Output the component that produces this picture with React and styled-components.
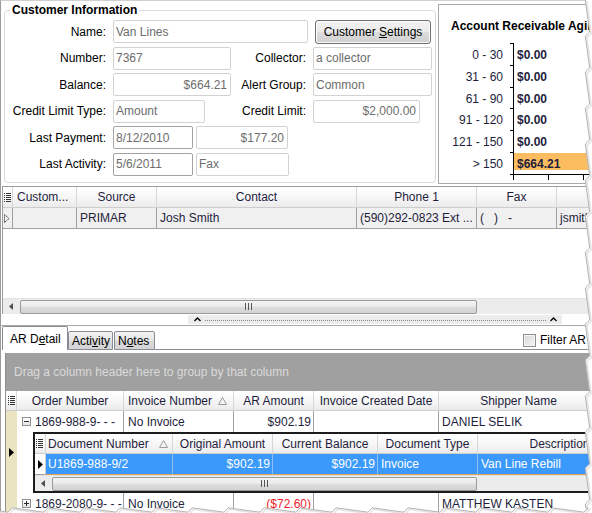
import React from 'react';
import styled, { createGlobalStyle } from 'styled-components';

const GRID_TEXT = '#1e1e3c';

const Global = createGlobalStyle`
  html, body { margin: 0; padding: 0; background: #fff; }
  body {
    font-family: "Liberation Sans", Arial, sans-serif;
    font-size: 12px;
    color: #000;
    overflow: hidden;
  }
  * { box-sizing: border-box; }
`;

const Page = styled.div`
  position: relative;
  width: 592px;
  height: 513px;
  overflow: hidden;
`;

const Screen = styled.div`
  width: 592px;
  height: 513px;
  overflow: hidden;
  background: #fff;
  border-left: 1px solid #9c9c9c;
  border-top: 1px solid #d0d0d0;
  display: flex;
  flex-direction: column;
`;

/* ---------- top section ---------- */
const TopSection = styled.div`
  display: flex;
  height: 184px;
  padding-left: 3px;
  flex-shrink: 0;
`;

const GroupBox = styled.fieldset`
  margin: 2px 0 0 0;
  padding: 3px 0 0 0;
  width: 432px;
  height: 180px;
  border: 1px solid #d3dce3;
  border-radius: 4px;
  min-width: 0;
  flex-shrink: 0;
`;

const Legend = styled.legend`
  margin-left: 5px;
  padding: 0 2px;
  font-weight: bold;
  font-size: 12px;
  line-height: 14px;
  color: #000;
`;

const Form = styled.div`
  display: flex;
  flex-direction: column;
  gap: 3.6px;
`;

const FormRow = styled.div`
  display: flex;
  align-items: center;
  height: 23px;
`;

const Label = styled.div`
  width: ${p => p.$w}px;
  flex-shrink: 0;
  text-align: right;
  padding-right: 7px;
  white-space: nowrap;
  color: #000;
`;

const Field = styled.div`
  width: ${p => p.$w}px;
  height: 23px;
  flex-shrink: 0;
  margin-left: ${p => p.$ml || 0}px;
  border: 1px solid ${p => (p.$dark ? '#a3a3a3' : '#d2d2d2')};
  border-radius: 2px;
  background: #fff;
  color: #6d6d6d;
  display: flex;
  align-items: center;
  justify-content: ${p => (p.$right ? 'flex-end' : 'flex-start')};
  padding: 0 ${p => (p.$right ? 3 : 2)}px;
  white-space: nowrap;
  overflow: hidden;
`;

const Button = styled.button`
  width: 116px;
  height: 24px;
  margin-left: 7px;
  padding: 0;
  border: 1px solid #707070;
  border-radius: 3px;
  background: linear-gradient(#f2f2f2 0%, #ebebeb 48%, #dddddd 52%, #cfcfcf 100%);
  box-shadow: inset 0 0 0 1px #fbfbfb;
  font: inherit;
  color: #000;
  flex-shrink: 0;
`;

const ArPanel = styled.div`
  flex: 1;
  min-width: 0;
  margin: 3px 0 0 2px;
  height: 180px;
  border: 1px solid #a9a9a9;
  border-right: none;
  background: #fff;
  overflow: hidden;
`;

const ArTitle = styled.div`
  padding: 15px 0 0 12px;
  font-weight: bold;
  line-height: 12px;
  white-space: nowrap;
  color: #000;
`;

const ChartSvg = styled.svg`
  display: block;
  margin: 8px 0 0 1px;
  font-family: "Liberation Sans", Arial, sans-serif;
  font-size: 12px;
`;

/* ---------- grids ---------- */
const DataGrid = styled.div`
  display: flex;
  flex-direction: column;
  overflow: hidden;
  margin: 1px 0 0 1px;
  height: 128px;
  border-top: 1px solid #9d9d9d;
  border-left: 1px solid #9d9d9d;
  flex-shrink: 0;
`;

const GridRow = styled.div`
  display: grid;
  grid-template-columns: ${p => p.$cols};
  height: ${p => p.$h || 21}px;
  flex-shrink: 0;
`;

const HeadCell = styled.div`
  display: flex;
  align-items: center;
  justify-content: ${p => (p.$align === 'center' ? 'center' : p.$align === 'between' ? 'space-between' : 'flex-start')};
  padding: 0 ${p => (p.$pr ?? 4)}px 0 ${p => (p.$pl ?? 4)}px;
  background: linear-gradient(#ffffff, #f5f5f6 60%, #ebebec);
  border-right: 1px solid #d6d6d6;
  border-bottom: 1px solid #cdcdcd;
  color: ${GRID_TEXT};
  white-space: nowrap;
  overflow: hidden;
`;

const Cell = styled.div`
  display: flex;
  align-items: center;
  justify-content: ${p => (p.$right ? 'flex-end' : p.$center ? 'center' : 'flex-start')};
  padding: 0 ${p => (p.$right ? 2 : 0)}px 0 ${p => p.$pl ?? 3}px;
  background: ${p => p.$bg || 'transparent'};
  border-right: ${p => (p.$noline ? 'none' : `1px solid ${p.$line || '#a0a0a0'}`)};
  border-bottom: ${p => (p.$bottom ? `1px solid ${p.$bottom}` : 'none')};
  color: ${p => p.$color || GRID_TEXT};
  white-space: nowrap;
  overflow: hidden;
`;

const GridFill = styled.div`
  flex: 1;
  background: #fff;
`;

const ScrollBar = styled.div`
  display: flex;
  align-items: center;
  height: 16px;
  background: #ececec;
  border-top: 1px solid #e2e2e2;
  flex-shrink: 0;
`;

const ScrollArrow = styled.div`
  width: 16px;
  height: 100%;
  display: flex;
  align-items: center;
  justify-content: center;
  flex-shrink: 0;
`;

const Thumb = styled.div`
  width: ${p => p.$w}px;
  height: 14px;
  margin-left: ${p => p.$ml || 0}px;
  border: 1px solid #9a9a9a;
  border-radius: 2px;
  background: linear-gradient(#f5f5f5, #eaeaea 45%, #dcdcdc 55%, #d3d3d3);
  display: flex;
  align-items: center;
  justify-content: center;
  gap: 2px;
  flex-shrink: 0;
`;

const Grip = styled.span`
  width: 1px;
  height: 7px;
  background: #555;
`;

/* ---------- splitter ---------- */
const Splitter = styled.div`
  height: 11px;
  padding-left: 187px;
  flex-shrink: 0;
  display: flex;
  align-items: center;
`;

const SplitHandle = styled.div`
  width: 374px;
  height: 9px;
  background: #ececec;
  display: flex;
  align-items: center;
  gap: 4px;
  padding: 0 5px 0 6px;
`;

const Dots = styled.div`
  flex: 1;
  border-top: 1px dotted #8a8a8a;
  margin-top: 2px;
`;

/* ---------- lower panel ---------- */
const LowerPanel = styled.div`
  flex: 1;
  min-height: 0;
  border-top: 1px solid #a9a9a9;
  display: flex;
  flex-direction: column;
`;

const TabRow = styled.div`
  display: flex;
  align-items: flex-end;
  height: 24px;
  padding-left: 1px;
  flex-shrink: 0;
`;

const Tab = styled.div`
  width: ${p => p.$w}px;
  height: ${p => (p.$active ? 24 : 19)}px;
  margin-left: ${p => p.$ml || 0}px;
  border: 1px solid #898c95;
  border-bottom: ${p => (p.$active ? 'none' : '1px solid #898c95')};
  border-radius: 2px 2px 0 0;
  background: ${p => (p.$active ? '#fff' : 'linear-gradient(#f3f3f3, #e6e6e6 50%, #d9d9d9 51%, #d4d4d4)')};
  padding: ${p => (p.$active ? '5px 0 0 7px' : '2px 0 0 3px')};
  line-height: 14px;
  color: #000;
  white-space: nowrap;
  flex-shrink: 0;
`;

const TabFill = styled.div`
  flex: 1;
  align-self: stretch;
  border-bottom: 1px solid #898c95;
  display: flex;
  align-items: center;
  justify-content: flex-end;
  padding: 5px 6px 0 0;
`;

const FilterWrap = styled.label`
  display: flex;
  align-items: center;
  gap: 4px;
  color: #000;
`;

const CheckBox = styled.span`
  width: 13px;
  height: 13px;
  border: 1px solid #8e8f8f;
  background: linear-gradient(135deg, #d6d6d6, #f6f6f6);
  box-shadow: inset 0 0 0 1px #f4f4f4;
`;

const TabBody = styled.div`
  flex: 1;
  min-height: 0;
  padding: 3px 0 0 4px;
  display: flex;
  flex-direction: column;
`;

const LowerGrid = styled.div`
  flex: 1;
  min-height: 0;
  border-left: 1px solid #8f8f8f;
  display: flex;
  flex-direction: column;
  overflow: hidden;
`;

const GroupBy = styled.div`
  height: 38px;
  flex-shrink: 0;
  background: #a0a0a0;
  color: #dadada;
  display: flex;
  align-items: center;
  padding-left: 8px;
  white-space: nowrap;
`;

const Record = styled.div`
  display: flex;
  flex-shrink: 0;
`;

const Gutter = styled.div`
  width: 11px;
  flex-shrink: 0;
  background: #ebe4c2;
  display: flex;
  align-items: center;
  justify-content: center;
`;

const RecordBody = styled.div`
  flex: 1;
  min-width: 0;
  display: flex;
  flex-direction: column;
`;

const Detail = styled.div`
  height: 61px;
  padding-left: 16px;
  flex-shrink: 0;
`;

const ChildGrid = styled.div`
  height: 61px;
  border: 2px solid #1c1c1c;
  border-right: none;
  display: flex;
  flex-direction: column;
  overflow: hidden;
`;

const ExpandBox = styled.span`
  position: relative;
  width: 9px;
  height: 9px;
  margin-right: 4px;
  flex-shrink: 0;
  border: 1px solid #919191;
  background: linear-gradient(#ffffff, #e4e4e4);
  &::before {
    content: '';
    position: absolute;
    left: 1px;
    top: 3px;
    width: 5px;
    height: 1px;
    background: #2a2a2a;
  }
  &::after {
    content: '';
    display: ${p => (p.$plus ? 'block' : 'none')};
    position: absolute;
    left: 3px;
    top: 1px;
    width: 1px;
    height: 5px;
    background: #2a2a2a;
  }
`;

const Overlay = styled.svg`
  position: absolute;
  left: 0;
  top: 0;
  pointer-events: none;
`;

/* ---------- icons ---------- */
const ListIcon = () => (
  <svg width="7" height="9" viewBox="0 0 7 9">
    {[0, 2, 4, 6, 8].map(y => (
      <g key={y}>
        <rect x="0" y={y} width="1" height="1" fill="#333" />
        <rect x="2" y={y} width="5" height="1" fill="#333" />
      </g>
    ))}
  </svg>
);

const OutlineTri = () => (
  <svg width="6" height="9" viewBox="0 0 6 9">
    <path d="M0.5 0.5 L5 4.5 L0.5 8.5 Z" fill="none" stroke="#333" strokeDasharray="1.2 0.8" />
  </svg>
);

const SolidTri = () => (
  <svg width="5" height="9" viewBox="0 0 5 9">
    <path d="M0 0 L5 4.5 L0 9 Z" fill="#000" />
  </svg>
);

const SortTri = () => (
  <svg width="9" height="8" viewBox="0 0 9 8">
    <path d="M4.5 0.5 L8.5 7.5 L0.5 7.5 Z" fill="none" stroke="#9a9a9a" />
  </svg>
);

const Caret = () => (
  <svg width="7" height="5" viewBox="0 0 7 5">
    <path d="M0.5 4 L3.5 1 L6.5 4" fill="none" stroke="#000" strokeWidth="1.4" />
  </svg>
);

const LeftArrow = () => (
  <svg width="4" height="7" viewBox="0 0 4 7">
    <path d="M4 0 L0 3.5 L4 7 Z" fill="#505050" />
  </svg>
);

const Scroll = ({ thumb, ml }) => (
  <ScrollBar>
    <ScrollArrow>
      <LeftArrow />
    </ScrollArrow>
    <Thumb $w={thumb} $ml={ml}>
      <Grip />
      <Grip />
      <Grip />
    </Thumb>
  </ScrollBar>
);

/* ---------- chart ---------- */
const AGING = [
  ['0 - 30', '$0.00'],
  ['31 - 60', '$0.00'],
  ['61 - 90', '$0.00'],
  ['91 - 120', '$0.00'],
  ['121 - 150', '$0.00'],
  ['> 150', '$664.21'],
];

const AgingChart = () => {
  const step = 21.83;
  const top = 3;
  return (
    <ChartSvg width="160" height="142" viewBox="0 0 160 142">
      <rect x="74" y={Math.round(top + 5 * step) + 1} width="90" height="17" fill="#fbbd5f" />
      <line x1="73.5" y1="3" x2="73.5" y2="140" stroke="#000" />
      {Array.from({ length: 7 }).map((_, i) => {
        const y = Math.round(top + i * step) + 0.5;
        return <line key={i} x1="70" y1={y} x2="73.5" y2={y} stroke="#000" />;
      })}
      <line x1="73" y1="134.5" x2="160" y2="134.5" stroke="#000" />
      <line x1="108.5" y1="134" x2="108.5" y2="140" stroke="#000" />
      <line x1="143.5" y1="134" x2="143.5" y2="140" stroke="#000" />
      {AGING.map(([label, value], i) => {
        const cy = top + (i + 0.5) * step + 1;
        return (
          <g key={label}>
            <text x="63" y={cy} textAnchor="end" dominantBaseline="central" fill={GRID_TEXT}>
              {label}
            </text>
            <text x="77" y={cy} dominantBaseline="central" fill={GRID_TEXT} fontWeight="bold">
              {value}
            </text>
          </g>
        );
      })}
    </ChartSvg>
  );
};

/* ---------- torn edge ---------- */
const TornEdge = () => {
  const right = [];
  for (let i = 0; i <= 127; i++) {
    const j = ((i * 37) % 9) - 4;
    right.push([587.5 + j * 0.55, i * 4]);
  }
  const bottom = [];
  for (let i = 0; i <= 148; i++) {
    const j = ((i * 53) % 9) - 4;
    bottom.push([588 - i * 4, 510 + j * 0.55]);
  }
  const edge = [...right, ...bottom];
  const last = bottom[bottom.length - 1];
  const poly = [[600, -2], [right[0][0], -2], ...edge, [-2, last[1]], [-2, 520], [600, 520]];
  const toStr = pts => pts.map(p => p.join(',')).join(' ');
  return (
    <Overlay width="592" height="513" viewBox="0 0 592 513">
      <polygon points={toStr(poly)} fill="#fff" />
      <polyline points={toStr(edge.map(([x, y]) => [x + 1.5, y + 1.5]))} fill="none" stroke="#e2e2e2" strokeWidth="1.5" />
      <polyline points={toStr(edge)} fill="none" stroke="#b4b4b4" strokeWidth="1" />
    </Overlay>
  );
};

const CONTACT_COLS = '10px 64px 80px 200px 120px 80px 1fr';
const LOWER_HEAD_COLS = '11px 107px 110px 80px 125px 160px 1fr';
const MASTER_COLS = '107px 110px 80px 125px 160px 1fr';
const CHILD_COLS = '11px 127px 100px 105px 100px 164px 1fr';

const SEL_BG = '#3a99fb';
const SEL_LINE = '#8fc0f2';

const MasterRow = ({ plus, order, invoice, amount, red, shipper }) => (
  <GridRow $cols={MASTER_COLS} $h={21}>
    <Cell $pl={5} $line="#a0a0a0">
      <ExpandBox $plus={plus} />
      {order}
    </Cell>
    <Cell $pl={4}>{invoice}</Cell>
    <Cell $right $color={red ? '#ee1d2a' : GRID_TEXT}>{amount}</Cell>
    <Cell />
    <Cell $pl={3}>{shipper}</Cell>
    <Cell $noline />
  </GridRow>
);

export default function App() {
  return (
    <>
      <Global />
      <Page>
        <Screen>
          <TopSection>
            <GroupBox>
              <Legend>Customer Information</Legend>
              <Form>
                <FormRow>
                  <Label $w={108}>Name:</Label>
                  <Field $w={195}>Van Lines</Field>
                  <Button>
                    Customer <u>S</u>ettings
                  </Button>
                </FormRow>
                <FormRow>
                  <Label $w={108}>Number:</Label>
                  <Field $w={118}>7367</Field>
                  <Label $w={82}>Collector:</Label>
                  <Field $w={119}>a collector</Field>
                </FormRow>
                <FormRow>
                  <Label $w={108}>Balance:</Label>
                  <Field $w={118} $right>$664.21</Field>
                  <Label $w={82}>Alert Group:</Label>
                  <Field $w={119}>Common</Field>
                </FormRow>
                <FormRow>
                  <Label $w={108}>Credit Limit Type:</Label>
                  <Field $w={92}>Amount</Field>
                  <Label $w={108}>Credit Limit:</Label>
                  <Field $w={107} $right>$2,000.00</Field>
                </FormRow>
                <FormRow>
                  <Label $w={108}>Last Payment:</Label>
                  <Field $w={80} $dark>8/12/2010</Field>
                  <Field $w={92} $ml={3} $right>$177.20</Field>
                </FormRow>
                <FormRow>
                  <Label $w={108}>Last Activity:</Label>
                  <Field $w={80} $dark>5/6/2011</Field>
                  <Field $w={93} $ml={3}>Fax</Field>
                </FormRow>
              </Form>
            </GroupBox>
            <ArPanel>
              <ArTitle>Account Receivable Aging</ArTitle>
              <AgingChart />
            </ArPanel>
          </TopSection>

          <DataGrid>
            <GridRow $cols={CONTACT_COLS} $h={21}>
              <HeadCell $pl={1} $pr={0}>
                <ListIcon />
              </HeadCell>
              <HeadCell>Custom...</HeadCell>
              <HeadCell $align="center">Source</HeadCell>
              <HeadCell $align="center">Contact</HeadCell>
              <HeadCell $align="center">Phone 1</HeadCell>
              <HeadCell $align="center">Fax</HeadCell>
              <HeadCell $align="center" />
            </GridRow>
            <GridRow $cols={CONTACT_COLS} $h={21}>
              <Cell $pl={1} $bg="#f0f0f0" $bottom="#a0a0a0">
                <OutlineTri />
              </Cell>
              <Cell $bg="#f0f0f0" $bottom="#a0a0a0" />
              <Cell $bg="#f0f0f0" $bottom="#a0a0a0">PRIMAR</Cell>
              <Cell $bg="#f0f0f0" $bottom="#a0a0a0">Josh Smith</Cell>
              <Cell $bg="#f0f0f0" $bottom="#a0a0a0">(590)292-0823 Ext ...</Cell>
              <Cell $bg="#f0f0f0" $bottom="#a0a0a0">(&nbsp;&nbsp;&nbsp;)&nbsp;&nbsp;&nbsp;-</Cell>
              <Cell $bg="#f0f0f0" $bottom="#a0a0a0">jsmith@vanlines.com</Cell>
            </GridRow>
            <GridFill />
            <Scroll thumb={457} ml={1} />
          </DataGrid>

          <Splitter>
            <SplitHandle>
              <Caret />
              <Dots />
              <Caret />
            </SplitHandle>
          </Splitter>

          <LowerPanel>
            <TabRow>
              <Tab $w={66} $active>
                AR D<u>e</u>tail
              </Tab>
              <Tab $w={45}>
                Acti<u>v</u>ity
              </Tab>
              <Tab $w={41} $ml={1}>
                N<u>o</u>tes
              </Tab>
              <TabFill>
                <FilterWrap>
                  <CheckBox />
                  Filter AR
                </FilterWrap>
              </TabFill>
            </TabRow>
            <TabBody>
              <LowerGrid>
                <GroupBy>Drag a column header here to group by that column</GroupBy>
                <GridRow $cols={LOWER_HEAD_COLS} $h={20}>
                  <HeadCell $pl={2} $pr={0}>
                    <ListIcon />
                  </HeadCell>
                  <HeadCell $align="center">Order Number</HeadCell>
                  <HeadCell $align="between" $pr={6}>
                    Invoice Number
                    <SortTri />
                  </HeadCell>
                  <HeadCell $align="center">AR Amount</HeadCell>
                  <HeadCell $align="center">Invoice Created Date</HeadCell>
                  <HeadCell $align="center">Shipper Name</HeadCell>
                  <HeadCell />
                </GridRow>

                <Record>
                  <Gutter>
                    <SolidTri />
                  </Gutter>
                  <RecordBody>
                    <MasterRow order="1869-988-9- - -" invoice="No Invoice" amount="$902.19" shipper="DANIEL SELIK" />
                    <Detail>
                      <ChildGrid>
                        <GridRow $cols={CHILD_COLS} $h={20}>
                          <HeadCell $pl={1} $pr={0}>
                            <ListIcon />
                          </HeadCell>
                          <HeadCell $align="between" $pl={2} $pr={4}>
                            Document Number
                            <SortTri />
                          </HeadCell>
                          <HeadCell $align="center">Original Amount</HeadCell>
                          <HeadCell $align="center">Current Balance</HeadCell>
                          <HeadCell $align="center">Document Type</HeadCell>
                          <HeadCell $align="center">Description</HeadCell>
                          <HeadCell />
                        </GridRow>
                        <GridRow $cols={CHILD_COLS} $h={21}>
                          <Cell $pl={3} $bg="#fff" $line="#d0d0d0" $bottom="#a0a0a0">
                            <SolidTri />
                          </Cell>
                          <Cell $pl={2} $bg={SEL_BG} $color="#fff" $line={SEL_LINE} $bottom="#e0a050">
                            U1869-988-9/2
                          </Cell>
                          <Cell $right $bg={SEL_BG} $color="#fff" $line={SEL_LINE} $bottom="#e0a050">
                            $902.19
                          </Cell>
                          <Cell $right $bg={SEL_BG} $color="#fff" $line={SEL_LINE} $bottom="#e0a050">
                            $902.19
                          </Cell>
                          <Cell $pl={3} $bg={SEL_BG} $color="#fff" $line={SEL_LINE} $bottom="#e0a050">
                            Invoice
                          </Cell>
                          <Cell $pl={3} $bg={SEL_BG} $color="#fff" $line={SEL_LINE} $bottom="#e0a050">
                            Van Line Rebill
                          </Cell>
                          <Cell $bg={SEL_BG} $noline $bottom="#e0a050" />
                        </GridRow>
                        <Scroll thumb={425} ml={1} />
                      </ChildGrid>
                    </Detail>
                  </RecordBody>
                </Record>

                <Record>
                  <Gutter />
                  <RecordBody>
                    <MasterRow plus order="1869-2080-9- - -" invoice="No Invoice" amount="($72.60)" red shipper="MATTHEW KASTEN" />
                  </RecordBody>
                </Record>
              </LowerGrid>
            </TabBody>
          </LowerPanel>
        </Screen>
        <TornEdge />
      </Page>
    </>
  );
}
